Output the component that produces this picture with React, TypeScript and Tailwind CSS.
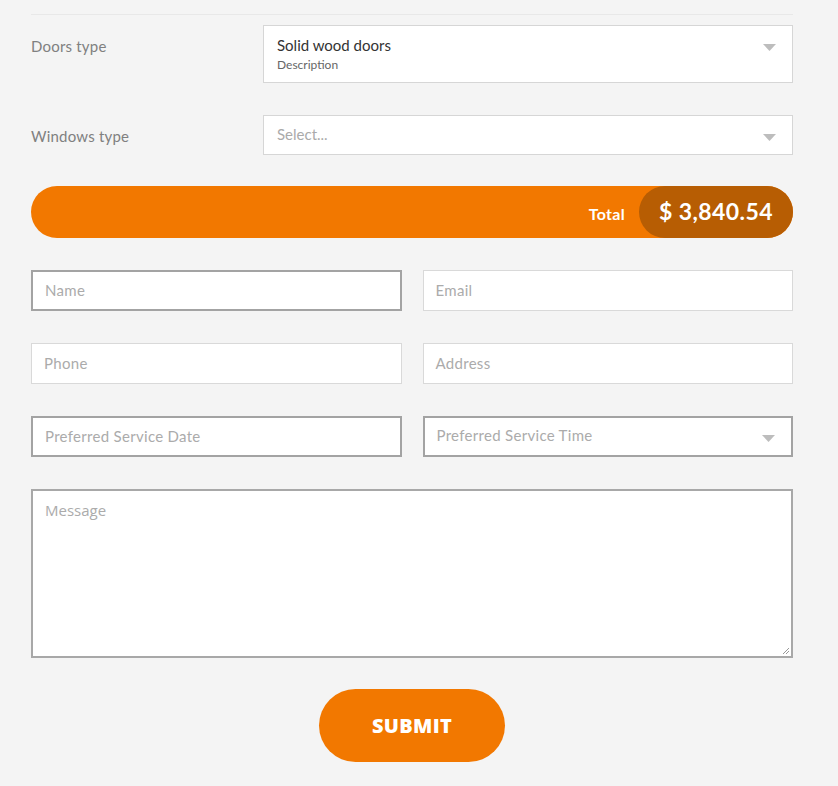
const Arrow = () => (
  <svg width="13" height="7" viewBox="0 0 13 7" className="shrink-0">
    <path d="M0 0 L13 0 L6.5 7 Z" fill="#bdbdbd" />
  </svg>
);

type Field = {
  placeholder: string;
  dark?: boolean;
  select?: boolean;
};

const fields: Array<Field> = [
  { placeholder: "Name", dark: true },
  { placeholder: "Email" },
  { placeholder: "Phone" },
  { placeholder: "Address" },
  { placeholder: "Preferred Service Date", dark: true },
  { placeholder: "Preferred Service Time", dark: true, select: true },
];

const App = () => {
  return (
    <div className="min-h-[786px] bg-[#f4f4f4] font-['Lato','Open_Sans',sans-serif]">
      <div className="w-[762px] ml-[31px] pt-[14px]">
        <div className="h-px bg-[#e8e8e8]" />

        {/* doors */}
        <div className="flex items-center mt-[10px]">
          <div className="w-[232px] text-[15px] tracking-[0.2px] text-[#808080] -mt-[15px]">Doors type</div>
          <div className="flex-1 h-[58px] bg-white border border-[#d6d6d6] flex items-center justify-between pl-[13px] pr-[16px]">
            <div className="flex flex-col">
              <span className="text-[15px] leading-[20px] text-[#333]">Solid wood doors</span>
              <span className="text-[12px] leading-[16px] text-[#666] mt-[2px]">Description</span>
            </div>
            <div className="-mt-[14px]">
              <Arrow />
            </div>
          </div>
        </div>

        {/* windows */}
        <div className="flex items-center mt-[32px]">
          <div className="w-[232px] text-[15px] tracking-[0.2px] text-[#808080] pt-[3px]">Windows type</div>
          <div className="flex-1 h-[40px] bg-white border border-[#d6d6d6] flex items-center justify-between pl-[13px] pr-[16px]">
            <span className="text-[15px] text-[#aaa] -mt-[2px]">Select...</span>
            <div className="mt-[4px]">
              <Arrow />
            </div>
          </div>
        </div>

        {/* total */}
        <div className="mt-[31px] h-[52px] rounded-full bg-[#f27800] flex items-center justify-end">
          <span className="text-white font-bold text-[16px] tracking-[0.3px] mr-[14px] mt-[3px]">Total</span>
          <div className="h-full w-[154px] rounded-full bg-[#b75d03] flex items-center justify-center">
            <span className="text-white font-bold text-[23px] tracking-[0.4px] -mt-[1px]">$ 3,840.54</span>
          </div>
        </div>

        {/* inputs */}
        <div className="grid grid-cols-2 gap-x-[21px] gap-y-[32px] mt-[32px]">
          {fields.map((f, i) => (
            <div
              key={i}
              className={`h-[41px] bg-white flex items-center justify-between pl-[12px] pr-[16px] ${
                f.dark ? "border-2 border-[#a3a3a3]" : "border border-[#d9d9d9]"
              } ${f.select ? "h-[39px]" : ""}`}
            >
              <span className={`text-[15px] tracking-[0.3px] text-[#ababab] ${f.select ? "-mt-[2px]" : ""}`}>
                {f.placeholder}
              </span>
              {f.select && (
                <div className="mt-[4px]">
                  <Arrow />
                </div>
              )}
            </div>
          ))}
        </div>

        {/* message */}
        <div className="relative mt-[32px] h-[169px] bg-white border-2 border-[#a8a8a8] pl-[12px] pt-[7px]">
          <span className="text-[15px] text-[#ababab] font-['Open_Sans',sans-serif]">Message</span>
          <svg width="8" height="8" viewBox="0 0 8 8" className="absolute right-[1px] bottom-[1px]">
            <path d="M7 1 L1 7 M7 4 L4 7" stroke="#999" strokeWidth="1" />
          </svg>
        </div>

        <div className="flex justify-center mt-[31px]">
          <button className="w-[186px] h-[73px] rounded-full bg-[#f27800] text-white font-extrabold text-[20px] tracking-[0.3px] font-['Open_Sans',sans-serif]">
            SUBMIT
          </button>
        </div>
      </div>
    </div>
  );
};

export default App;
